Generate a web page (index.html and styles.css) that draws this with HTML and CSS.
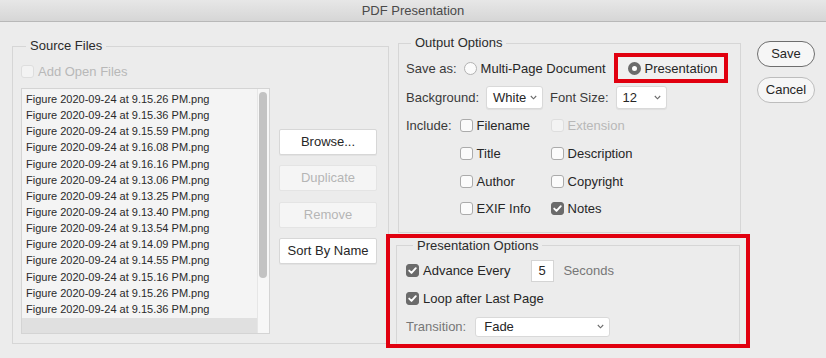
FILE: index.html
```html
<!DOCTYPE html>
<html>
<head>
<meta charset="utf-8">
<title>PDF Presentation</title>
<link rel="stylesheet" href="styles.css">
</head>
<body>
<div class="titlebar">PDF Presentation</div>
<div class="main">
  <fieldset class="group source">
    <legend>Source Files</legend>
    <label class="check disabled addopen"><span class="box"></span>Add Open Files</label>
    <div class="source-body">
      <div class="list">
        <div class="items">
          <div class="item">Figure 2020-09-24 at 9.15.26 PM.png</div>
          <div class="item">Figure 2020-09-24 at 9.15.36 PM.png</div>
          <div class="item">Figure 2020-09-24 at 9.15.59 PM.png</div>
          <div class="item">Figure 2020-09-24 at 9.16.08 PM.png</div>
          <div class="item">Figure 2020-09-24 at 9.16.16 PM.png</div>
          <div class="item">Figure 2020-09-24 at 9.13.06 PM.png</div>
          <div class="item">Figure 2020-09-24 at 9.13.25 PM.png</div>
          <div class="item">Figure 2020-09-24 at 9.13.40 PM.png</div>
          <div class="item">Figure 2020-09-24 at 9.13.54 PM.png</div>
          <div class="item">Figure 2020-09-24 at 9.14.09 PM.png</div>
          <div class="item">Figure 2020-09-24 at 9.14.55 PM.png</div>
          <div class="item">Figure 2020-09-24 at 9.15.16 PM.png</div>
          <div class="item">Figure 2020-09-24 at 9.15.26 PM.png</div>
          <div class="item">Figure 2020-09-24 at 9.15.36 PM.png</div>
        </div>
        <div class="vscroll"><div class="thumb"></div></div>
        <div class="hband"></div>
        <div class="corner"></div>
      </div>
      <div class="src-buttons">
        <div class="btn">Browse...</div>
        <div class="btn disabled">Duplicate</div>
        <div class="btn disabled">Remove</div>
        <div class="btn">Sort By Name</div>
      </div>
    </div>
  </fieldset>

  <div class="right">
    <fieldset class="group output">
      <legend>Output Options</legend>
      <div class="row">
        <span class="lbl">Save as:</span>
        <label class="radio"><span class="dot"></span>Multi-Page Document</label>
        <label class="radio selected mark"><span class="dot"></span>Presentation</label>
      </div>
      <div class="row bgrow">
        <span class="lbl">Background:</span>
        <div class="select sel-bg"><span>White</span><svg class="chev" width="7" height="5" viewBox="0 0 7 5"><path d="M0.8 1 L3.5 3.8 L6.2 1" fill="none" stroke="#6a6a6a" stroke-width="1.1"/></svg></div>
        <span class="lbl fs">Font Size:</span>
        <div class="select sel-fs"><span>12</span><svg class="chev" width="7" height="5" viewBox="0 0 7 5"><path d="M0.8 1 L3.5 3.8 L6.2 1" fill="none" stroke="#6a6a6a" stroke-width="1.1"/></svg></div>
      </div>
      <div class="include">
        <span class="lbl">Include:</span>
        <div class="incgrid">
          <label class="check"><span class="box"></span>Filename</label>
          <label class="check disabled"><span class="box"></span>Extension</label>
          <label class="check"><span class="box"></span>Title</label>
          <label class="check"><span class="box"></span>Description</label>
          <label class="check"><span class="box"></span>Author</label>
          <label class="check"><span class="box"></span>Copyright</label>
          <label class="check"><span class="box"></span>EXIF Info</label>
          <label class="check"><span class="box checked"><svg width="13" height="13" viewBox="0 0 13 13"><path d="M3.2 6.6 L5.5 8.9 L9.8 4.2" fill="none" stroke="#fff" stroke-width="1.9" stroke-linecap="round" stroke-linejoin="round"/></svg></span>Notes</label>
        </div>
      </div>
    </fieldset>

    <div class="highlight">
      <fieldset class="group pres">
        <legend>Presentation Options</legend>
        <div class="row prow">
          <label class="check"><span class="box checked"><svg width="13" height="13" viewBox="0 0 13 13"><path d="M3.2 6.6 L5.5 8.9 L9.8 4.2" fill="none" stroke="#fff" stroke-width="1.9" stroke-linecap="round" stroke-linejoin="round"/></svg></span>Advance Every</label>
          <div class="num">5</div>
          <span class="muted secs">Seconds</span>
        </div>
        <div class="row prow">
          <label class="check"><span class="box checked"><svg width="13" height="13" viewBox="0 0 13 13"><path d="M3.2 6.6 L5.5 8.9 L9.8 4.2" fill="none" stroke="#fff" stroke-width="1.9" stroke-linecap="round" stroke-linejoin="round"/></svg></span>Loop after Last Page</label>
        </div>
        <div class="row prow trow">
          <span class="muted">Transition:</span>
          <div class="select sel-tr"><span>Fade</span><svg class="chev" width="7" height="5" viewBox="0 0 7 5"><path d="M0.8 1 L3.5 3.8 L6.2 1" fill="none" stroke="#6a6a6a" stroke-width="1.1"/></svg></div>
        </div>
      </fieldset>
    </div>
  </div>

  <div class="actions">
    <div class="pill primary">Save</div>
    <div class="pill">Cancel</div>
  </div>
</div>
</body>
</html>
```

FILE: styles.css
```css
* { box-sizing: border-box; }
html, body { margin: 0; padding: 0; }
body {
  width: 826px;
  height: 358px;
  overflow: hidden;
  background: #ececec;
  font-family: "Liberation Sans", Arial, sans-serif;
  font-size: 13px;
  color: #262626;
}

.titlebar {
  height: 22px;
  line-height: 21px;
  text-align: center;
  background: linear-gradient(#e7e7e7, #d6d6d6);
  border-bottom: 1px solid #b8b8b8;
  color: #4a4a4a;
  font-size: 13px;
}

.main {
  display: flex;
  align-items: flex-start;
  padding-left: 12px;
}

.group {
  margin: 0;
  border: 1px solid #d6d6d6;
  min-width: 0;
}
.group legend {
  padding: 0 4px;
  margin-left: 5px;
  line-height: 16px;
  font-size: 13px;
  color: #2b2b2b;
}

/* Source files */
.source {
  width: 377px;
  margin-top: 16px;
  padding: 9px 11px 9px 8px;
}
.addopen { height: 16px; }
.source-body {
  display: flex;
  align-items: flex-start;
  margin-top: 9px;
}
.list {
  width: 249px;
  height: 246px;
  border: 1px solid #d4d4d4;
  background: #f4f4f4;
  display: grid;
  grid-template-columns: 1fr 12px;
  grid-template-rows: 1fr 15px;
}
.items {
  padding: 2px 0 0 4px;
  overflow: hidden;
}
.item {
  font-size: 11px;
  line-height: 16.15px;
  height: 16.15px;
  color: #2a2a2a;
  white-space: nowrap;
}
.vscroll {
  background: #f7f7f7;
  border-left: 1px solid #e6e6e6;
  padding: 3px 1px 0 1px;
}
.thumb {
  width: 8px;
  height: 186px;
  border-radius: 4px;
  background: #c3c3c3;
}
.hband { background: #e0e0e0; }
.corner { background: #f7f7f7; border-left: 1px solid #e6e6e6; }

.src-buttons {
  margin-left: 9px;
  margin-top: 41px;
  width: 98px;
  display: flex;
  flex-direction: column;
  gap: 10.3px;
}
.btn {
  height: 26px;
  line-height: 24px;
  text-align: center;
  background: #fff;
  border: 1px solid #d7d7d7;
  border-radius: 2px;
  box-shadow: 0 1px 0 #e2e2e2;
  color: #262626;
}
.btn.disabled {
  background: #f5f5f5;
  border-color: #e4e4e4;
  box-shadow: none;
  color: #b5b5b5;
}

/* checkbox */
.check {
  display: flex;
  align-items: center;
  gap: 4px;
  white-space: nowrap;
}
.box {
  width: 13px;
  height: 13px;
  flex: none;
  border: 1px solid #ababab;
  border-radius: 3px;
  background: #fbfbfb;
  display: flex;
}
.box.checked {
  background: #6b6b6b;
  border-color: #6b6b6b;
}
.box.checked svg { margin: -1px; }
.check.disabled { color: #b8b8b8; }
.check.disabled .box { border-color: #dedede; background: #f3f3f3; }

/* right column */
.right {
  width: 343px;
  margin-left: 9px;
  margin-top: 13px;
}
.output {
  padding: 6px 6px 9px 7px;
}
.row {
  display: flex;
  align-items: center;
  height: 22px;
  gap: 7px;
  white-space: nowrap;
}
.lbl { color: #3a3a3a; }
.radio {
  display: flex;
  align-items: center;
  gap: 4px;
}
.dot {
  width: 13px;
  height: 13px;
  border-radius: 50%;
  border: 1px solid #b2b2b2;
  background: #fbfbfb;
  flex: none;
}
.radio.selected .dot {
  border: 4px solid #6b6b6b;
  background: #fff;
}
.mark {
  margin-left: 5px;
  height: 22px;
  width: 106px;
  padding-left: 10px;
  outline: 4px solid #e1000f;
  background: #f0f0f0;
}
.bgrow { margin-top: 7px; }
.bgrow .fs { margin-left: 0; }
.select {
  display: flex;
  align-items: center;
  justify-content: space-between;
  height: 23px;
  padding: 0 5px 0 6px;
  background: #fff;
  border: 1px solid #d9d9d9;
  border-radius: 3px;
  box-shadow: 0 1px 1px rgba(0,0,0,0.06);
  color: #262626;
}
.sel-bg { width: 57px; }
.sel-fs { width: 51px; }
.chev { flex: none; }

.include {
  display: flex;
  gap: 8px;
  margin-top: 4px;
}
.include .lbl { line-height: 27.67px; height: 27.67px; }
.incgrid {
  display: grid;
  grid-template-columns: 91px auto;
  grid-auto-rows: 27.67px;
  align-items: center;
}

/* highlight + presentation */
.highlight {
  margin: 1px -9px 0 -12px;
  border: 4px solid #e1000f;
  padding: 0 6px 0 6px;
}
.pres {
  padding: 6px 6px 5px 9px;
  border-bottom-color: transparent;
}
.pres legend { margin-left: 7px; }
.prow { gap: 0; }
.prow + .prow { margin-top: 6px; }
.num {
  margin-left: 21px;
  width: 23px;
  height: 22px;
  line-height: 20px;
  padding-left: 6px;
  background: #fff;
  border: 1px solid #d4d4d4;
}
.muted { color: #777; }
.secs { margin-left: 9px; }
.trow { margin-top: 6.5px; }
.sel-tr {
  width: 135px;
  height: 20px;
  margin-left: 9px;
  padding-left: 8px;
  box-shadow: none;
}

/* actions */
.actions {
  margin-left: 16px;
  margin-top: 19px;
  width: 58px;
  display: flex;
  flex-direction: column;
  gap: 10px;
}
.pill {
  height: 26px;
  line-height: 24px;
  text-align: center;
  border-radius: 13px;
  border: 1px solid #bdbdbd;
  background: #f6f6f6;
  color: #262626;
}
.pill.primary { border-color: #6e6e6e; }
```
